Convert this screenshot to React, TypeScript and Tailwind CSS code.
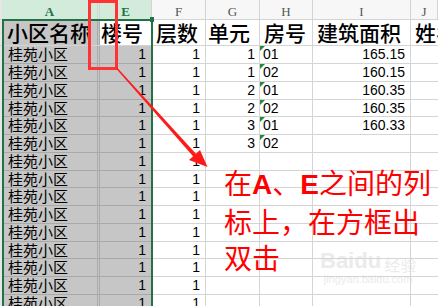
import React from 'react';

const cjk = { fontFamily: '"Noto Sans CJK SC", "Liberation Sans", sans-serif' };
const num = { fontFamily: '"Liberation Sans", "Noto Sans CJK SC", sans-serif' };
const serif = { fontFamily: '"Liberation Serif", serif' };

const units = [
  { g: '1', h: '01', i: '165.15' },
  { g: '1', h: '02', i: '160.15' },
  { g: '2', h: '01', i: '160.35' },
  { g: '2', h: '02', i: '160.35' },
  { g: '3', h: '01', i: '160.33' },
  { g: '3', h: '02', i: '' },
];

const rows = Array.from({ length: 15 }, (_, i) => units[i] || { g: '', h: '', i: '' });

const Letter: React.FC<{ w: string; label: string; on?: boolean }> = ({ w, label, on }) => (
  <div
    className={`${w} h-full shrink-0 flex justify-center pt-[5px] text-[13px] leading-[14px] border-r border-[#d4d4d4] ${
      on ? 'bg-[#d3ebdb] text-[#217346] font-bold' : 'bg-[#f7f7f7] text-[#555]'
    }`}
    style={serif}
  >
    {label}
  </div>
);

const App: React.FC = () => {
  return (
    <div className="relative w-[438px] h-[306px] overflow-hidden bg-white">
      {/* column letters */}
      <div className="flex h-[20px] border-b border-[#d4d4d4]">
        <div className="w-[2px] shrink-0 bg-[#e6e6e6]" />
        <Letter w="w-[96px]" label="A" on />
        <div className="w-[2px] shrink-0 bg-[#d3ebdb] border-r border-[#d4d4d4]" />
        <Letter w="w-[52px]" label="E" on />
        <Letter w="w-[54px]" label="F" />
        <Letter w="w-[54px]" label="G" />
        <Letter w="w-[53px]" label="H" />
        <Letter w="w-[98px]" label="I" />
        <Letter w="flex-1" label="J" />
      </div>

      {/* header row */}
      <div className="flex h-[26px] border-b border-[#d4d4d4] text-[21px] font-medium text-black" style={cjk}>
        <div className="w-[2px] shrink-0 bg-[#e6e6e6]" />
        <div className="w-[96px] shrink-0 flex items-center pl-[5px] bg-[#c6c6c6] border-r border-[#a9a9a9]">小区名称</div>
        <div className="w-[2px] shrink-0 bg-[#c6c6c6] border-r border-[#a9a9a9]" />
        <div className="w-[52px] shrink-0 flex items-center pl-[1px] border-r border-[#d4d4d4]">楼号</div>
        <div className="w-[54px] shrink-0 flex items-center pl-[4px] border-r border-[#d4d4d4]">层数</div>
        <div className="w-[54px] shrink-0 flex items-center pl-[2px] border-r border-[#d4d4d4]">单元</div>
        <div className="w-[53px] shrink-0 flex items-center pl-[4px] border-r border-[#d4d4d4]">房号</div>
        <div className="w-[98px] shrink-0 flex items-center pl-[4px] border-r border-[#d4d4d4]">建筑面积</div>
        <div className="flex-1 flex items-center pl-[4px] whitespace-nowrap overflow-hidden">姓名</div>
      </div>

      {/* data rows */}
      {rows.map((r, idx) => (
        <div
          key={idx}
          className={`flex ${idx % 4 === 3 ? 'h-[17px]' : 'h-[18px]'} text-[14px]`}
        >
          <div className="w-[2px] shrink-0 bg-[#e6e6e6]" />
          <div
            className="w-[96px] shrink-0 flex items-center pl-[6px] text-[15px] bg-[#c6c6c6] border-r border-b border-[#a9a9a9] text-black"
            style={cjk}
          >
            桂苑小区
          </div>
          <div className="w-[2px] shrink-0 bg-[#c6c6c6] border-r border-b border-[#a9a9a9]" />
          <div
            className="w-[52px] shrink-0 flex items-center justify-end pr-[5px] bg-[#c6c6c6] border-r border-b border-[#a9a9a9]"
            style={num}
          >
            1
          </div>
          <div className="w-[54px] shrink-0 flex items-center justify-end pr-[5px] border-r border-b border-[#d4d4d4]" style={num}>
            1
          </div>
          <div className="w-[54px] shrink-0 flex items-center justify-end pr-[4px] border-r border-b border-[#d4d4d4]" style={num}>
            {r.g}
          </div>
          <div className="relative w-[53px] shrink-0 flex items-center pl-[3px] border-r border-b border-[#d4d4d4]" style={num}>
            {r.h && (
              <span className="absolute left-0 top-0 w-0 h-0 border-t-[5px] border-r-[5px] border-t-[#1e8a3a] border-r-transparent" />
            )}
            {r.h}
          </div>
          <div className="w-[98px] shrink-0 flex items-center justify-end pr-[5px] border-r border-b border-[#d4d4d4]" style={num}>
            {r.i}
          </div>
          <div className="flex-1 border-b border-[#d4d4d4]" />
        </div>
      ))}

      {/* selection outline */}
      <div className="absolute left-[2px] top-[19px] w-[151px] h-[300px] border-2 border-[#217346]" />
      <div className="absolute left-[150px] top-[17px] w-[4px] h-[5px] bg-[#217346]" />

      {/* annotation */}
      <svg className="absolute left-0 top-0" width="438" height="306" viewBox="0 0 438 306">
        <rect x="89.5" y="1.5" width="27" height="67" fill="none" stroke="#ff3333" strokeWidth="3" />
        <polygon points="116,68.5 117,67.5 198,156 195,158.5" fill="#ff1a1a" />
        <polygon points="207.5,167 189,160 200,150" fill="#ff1a1a" />
      </svg>

      <div
        className="absolute left-[224px] top-[164px] w-[214px] text-[28px] leading-[36px] text-[#ff0000]"
        style={cjk}
      >
        在<span className="font-bold" style={num}>A</span>、<span className="font-bold" style={num}>E</span>之间的列标上，在方框出双击
      </div>

      {/* watermark */}
      <div className="absolute left-[320px] top-[250px] flex flex-col items-center text-[#d8d8d8] opacity-50">
        <div className="flex items-end gap-[3px] leading-none">
          <span className="text-[22px] font-bold" style={num}>Baidu</span>
          <span className="text-[16px]" style={cjk}>经验</span>
        </div>
        <span className="text-[11px] leading-[14px]" style={num}>jingyan.baidu.com</span>
      </div>
    </div>
  );
};

export default App;
